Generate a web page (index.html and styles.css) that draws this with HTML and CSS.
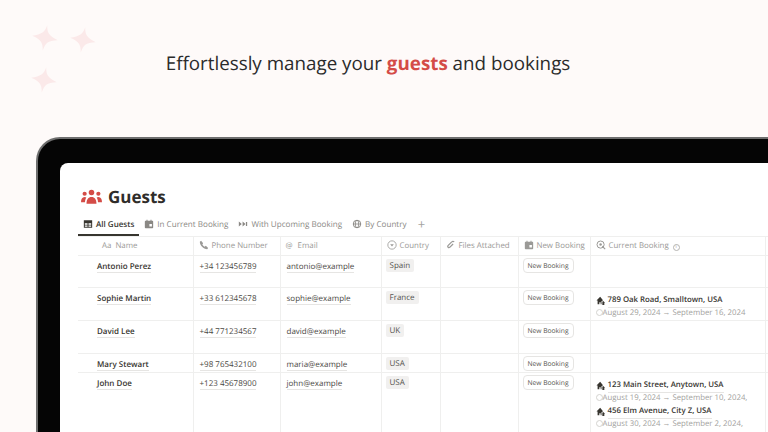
FILE: index.html
```html
<!DOCTYPE html>
<html lang="en">
<head>
    <meta charset="UTF-8">
    <title>Guests</title>
    <link rel="stylesheet" href="styles.css">
</head>
<body>
    <svg width="0" height="0" class="defs">
        <symbol id="i-cal" viewBox="0 0 12 12"><path d="M1 3.2c0-.7.5-1.200 1.200-1.200H3V.8h1.200V2h3.600V.8H9V2h.8c.7 0 1.200.5 1.200 1.200v7.100c0 .5-.4.9-.9.9H1.900a.9.9 0 0 1-.9-.9zM6.500 6v3h3V6z"/></symbol>
        <symbol id="i-house" viewBox="0 0 12 12"><path d="M5 1 .6 5.400h1.300V10H4V7.500h1.600V10h1V6.200L8.400 5zM8.300 5.800l2.600 2.300H10v2.600H7.600V7.400z"/></symbol>
        <symbol id="i-star" viewBox="0 0 26 26"><path d="M13 0c1 7 3 10 13 13-10 2-12 5-13 13-1-8-4-11-13-13 9-3 12-6 13-13z"/></symbol>
    </svg>

    <div class="page">
        <div class="stars">
            <svg class="star star-a"><use href="#i-star"/></svg>
            <svg class="star star-b"><use href="#i-star"/></svg>
            <svg class="star star-c"><use href="#i-star"/></svg>
        </div>

        <h1 class="headline">Effortlessly manage your <strong>guests</strong> and bookings</h1>

        <div class="device">
            <div class="screen">
                <div class="title-row">
                    <svg class="title-icon" viewBox="0 0 22 16">
                        <circle cx="11" cy="3.2" r="2.9"/><circle cx="3.8" cy="4.6" r="2.2"/><circle cx="18.2" cy="4.6" r="2.2"/>
                        <path d="M5.800 15c0-4.600 1.900-7 5.200-7s5.200 2.400 5.200 7zM0 13.500c0-3.300 1.200-5.500 3.700-5.500 .8 0 1.400.2 1.900.6C4.700 10 4.300 11.600 4.200 13.500zM22 13.500c0-3.300-1.200-5.500-3.700-5.500-.8 0-1.400.2-1.900.6.900 1.400 1.300 3 1.400 4.900z"/>
                    </svg>
                    <h2>Guests</h2>
                </div>

                <div class="tabs">
                    <div class="tab active">
                        <svg class="ico" viewBox="0 0 12 12"><path d="M1 1.500h10v9H1zM2.200 5v1.800h3.200V5zm4.400 0v1.800h3.200V5zM2.200 7.800v1.600h3.200V7.800zm4.400 0v1.600h3.200V7.800z" fill-rule="evenodd"/></svg>
                        All Guests
                    </div>
                    <div class="tab"><svg class="ico"><use href="#i-cal"/></svg>In Current Booking</div>
                    <div class="tab">
                        <svg class="ico" viewBox="0 0 12 12"><path d="M1 3l3.500 3L1 9zM5.500 3 9 6 5.500 9zM9.500 3.500h1.500v5H9.500z"/></svg>
                        With Upcoming Booking
                    </div>
                    <div class="tab">
                        <svg class="ico" viewBox="0 0 12 12"><circle cx="6" cy="6" r="4.500" fill="none" stroke="currentColor" stroke-width="1.200"/><ellipse cx="6" cy="6" rx="2" ry="4.500" fill="none" stroke="currentColor"/><path d="M1.500 6h9" stroke="currentColor"/></svg>
                        By Country
                    </div>
                    <span class="tab-add">+</span>
                </div>

                <table class="guests">
                    <colgroup>
                        <col class="c-name"><col class="c-phone"><col class="c-email"><col class="c-country">
                        <col class="c-files"><col class="c-new"><col class="c-current"><col class="c-rest">
                    </colgroup>
                    <thead>
                        <tr>
                            <th class="name-head"><span class="aa">Aa</span>Name</th>
                            <th><svg class="ico" viewBox="0 0 12 12"><path d="M2.500 1 5 3.800 4 5.300c.6 1.100 1.500 2 2.700 2.700l1.500-1 2.800 2.500-1.200 1.500C5.300 11 1 6.700 1 2.200z"/></svg>Phone Number</th>
                            <th><span class="at">@</span>Email</th>
                            <th><svg class="ico" viewBox="0 0 12 12"><circle cx="6" cy="6" r="5" fill="none" stroke="currentColor"/><path d="M3.800 5h4.400L6 7.800z"/></svg>Country</th>
                            <th><svg class="ico" viewBox="0 0 12 12"><path d="M9.800 2.200a2 2 0 0 0-2.900 0L2.400 6.700a1.500 1.500 0 0 0 2.100 2.100l4-4" fill="none" stroke="currentColor" stroke-width="1.500"/></svg>Files Attached</th>
                            <th><svg class="ico"><use href="#i-cal"/></svg>New Booking</th>
                            <th><svg class="ico" viewBox="0 0 12 12"><circle cx="5.500" cy="5.500" r="4.300" fill="none" stroke="currentColor" stroke-width="1.200"/><circle cx="5.500" cy="5.500" r="1.500"/><path d="M7.500 7.500l3.500 3.500" stroke="currentColor" stroke-width="1.300"/></svg>Current Booking<span class="info">i</span></th>
                            <th></th>
                        </tr>
                    </thead>
                    <tbody>
                        <tr class="r1">
                            <td class="name"><span>Antonio Perez</span></td>
                            <td><span class="line">+34 123456789</span></td>
                            <td><span class="line">antonio@example</span></td>
                            <td class="cell-tag"><span class="tag">Spain</span></td>
                            <td></td>
                            <td class="cell-btn"><span class="btn">New Booking</span></td>
                            <td></td><td></td>
                        </tr>
                        <tr class="r2">
                            <td class="name"><span>Sophie Martin</span></td>
                            <td><span class="line">+33 612345678</span></td>
                            <td><span class="line">sophie@example</span></td>
                            <td class="cell-tag"><span class="tag">France</span></td>
                            <td></td>
                            <td class="cell-btn"><span class="btn">New Booking</span></td>
                            <td class="booking">
                                <div class="place"><svg class="ico"><use href="#i-house"/></svg><span>789 Oak Road, Smalltown, USA</span></div>
                                <div class="dates"><i class="dot"></i>August 29, 2024 → September 16, 2024</div>
                            </td>
                            <td></td>
                        </tr>
                        <tr class="r3">
                            <td class="name"><span>David Lee</span></td>
                            <td><span class="line">+44 771234567</span></td>
                            <td><span class="line">david@example</span></td>
                            <td class="cell-tag"><span class="tag">UK</span></td>
                            <td></td>
                            <td class="cell-btn"><span class="btn">New Booking</span></td>
                            <td></td><td></td>
                        </tr>
                        <tr class="r4">
                            <td class="name"><span>Mary Stewart</span></td>
                            <td><span class="line">+98 765432100</span></td>
                            <td><span class="line">maria@example</span></td>
                            <td class="cell-tag"><span class="tag">USA</span></td>
                            <td></td>
                            <td class="cell-btn"><span class="btn">New Booking</span></td>
                            <td></td><td></td>
                        </tr>
                        <tr class="r5">
                            <td class="name"><span>John Doe</span></td>
                            <td><span class="line">+123 45678900</span></td>
                            <td><span class="line">john@example</span></td>
                            <td class="cell-tag"><span class="tag">USA</span></td>
                            <td></td>
                            <td class="cell-btn"><span class="btn">New Booking</span></td>
                            <td class="booking">
                                <div class="place"><svg class="ico"><use href="#i-house"/></svg><span>123 Main Street, Anytown, USA</span></div>
                                <div class="dates"><i class="dot"></i>August 19, 2024 → September 10, 2024,</div>
                                <div class="place"><svg class="ico"><use href="#i-house"/></svg><span>456 Elm Avenue, City Z, USA</span></div>
                                <div class="dates"><i class="dot"></i>August 30, 2024 → September 2, 2024,</div>
                            </td>
                            <td></td>
                        </tr>
                    </tbody>
                </table>
            </div>
        </div>
    </div>
</body>
</html>
```

FILE: styles.css
```css
* {
    margin: 0;
    padding: 0;
    box-sizing: border-box;
}

html, body {
    height: 432px;
    overflow: hidden;
}

body {
    font-family: 'Open Sans', sans-serif;
    background: #fefaf9;
    color: #37352f;
    text-rendering: geometricPrecision;
}

.defs {
    display: block;
    height: 0;
}

.page {
    position: relative;
    width: 768px;
    height: 432px;
    overflow: hidden;
}

/* decoration */
.star {
    position: absolute;
    width: 26px;
    height: 26px;
    fill: #fbe9e9;
    transform: rotate(10deg);
}

.star-a { left: 32px; top: 25px; }
.star-b { left: 70px; top: 27px; }
.star-c { left: 31px; top: 67px; }

.headline {
    padding: 49px 32px 0 0;
    height: 137px;
    text-align: center;
    font-size: 18.8px;
    line-height: 28px;
    font-weight: 400;
    color: #2b2b2b;
}

.headline strong {
    color: #d44c47;
    font-weight: 700;
}

.device {
    margin-left: 36px;
    width: 800px;
    height: 340px;
    padding: 24px 0 0 22px;
    background: #050505;
    border: 2px solid #6e6e6e;
    border-right: 0;
    border-bottom: 0;
    border-radius: 24px 0 0 0;
}

.screen {
    background: #fff;
    height: 320px;
    border-radius: 8px 0 0 0;
    padding: 22px 0 0 18px;
    overflow: hidden;
}

.title-row {
    display: flex;
    align-items: center;
    gap: 6px;
    height: 24px;
    padding-left: 3px;
}

.title-icon {
    width: 21px;
    height: 16px;
    fill: #d44c47;
}

.title-row h2 {
    font-size: 17px;
    font-weight: 700;
    line-height: 24px;
    color: #2f2d2a;
}

.tabs {
    display: flex;
    align-items: center;
    height: 24px;
    margin-top: 3px;
    font-size: 8.1px;
    font-weight: 500;
    color: #8a8884;
}

.tab {
    display: flex;
    align-items: center;
    gap: 3px;
    height: 100%;
    padding: 0 5px;
    white-space: nowrap;
}

.tab.active {
    color: #37352f;
    font-size: 8px;
    font-weight: 600;
    border-bottom: 2px solid #37352f;
    padding-top: 2px;
}

.tab-add {
    margin-left: 6px;
    font-size: 13px;
    font-weight: 400;
    color: #a5a4a1;
}

.ico {
    width: 10px;
    height: 10px;
    flex: none;
    fill: currentColor;
}

/* table */
.guests {
    table-layout: fixed;
    border-collapse: collapse;
    width: 690px;
    font-size: 8px;
    color: #4a4843;
}

.c-name { width: 115px; }
.c-phone { width: 87px; }
.c-email { width: 101px; }
.c-country { width: 59px; }
.c-files { width: 78px; }
.c-new { width: 72px; }
.c-current { width: 175px; }
.c-rest { width: 3px; }

.guests th, .guests td {
    border: 1px solid #efefee;
    vertical-align: top;
    white-space: nowrap;
    overflow: hidden;
}

.guests th:first-child, .guests td:first-child {
    border-left: 0;
}

.guests th {
    height: 19px;
    padding: 1px 5px 0;
    line-height: 17px;
    font-size: 7.9px;
    font-weight: 400;
    text-align: left;
    color: #9b9a97;
}

.guests th .ico {
    vertical-align: -1.500px;
    margin-right: 3px;
}

.guests td {
    padding: 4px 6px 0;
    line-height: 13px;
}

.guests th.name-head {
    padding-left: 24px;
}

.aa {
    margin-right: 4px;
}

.at {
    margin-right: 5px;
}

.info {
    display: inline-block;
    width: 7px;
    height: 7px;
    margin-left: 4px;
    border: 1px solid #b5b4b1;
    border-radius: 50%;
    font-size: 5px;
    line-height: 5px;
    text-align: center;
}

.r1 td { height: 32px; }
.r2 td { height: 33px; }
.r3 td { height: 33px; }
.r4 td { height: 19px; }
.r5 td { height: 80px; }

.guests td.name {
    padding-left: 19px;
    font-weight: 600;
    color: #37352f;
}

.name span, .line, .place span {
    border-bottom: 1px solid #e6e5e3;
}

.guests td.cell-tag {
    padding: 3px 4px 0;
}

.tag {
    display: inline-block;
    padding: 0 4px;
    height: 13px;
    line-height: 13px;
    font-size: 8px;
    background: #f1f0ef;
    border-radius: 2px;
    color: #55534e;
}

.guests td.cell-btn {
    padding: 2px 4px 0;
}

.btn {
    display: inline-block;
    height: 15px;
    padding: 0 4px;
    line-height: 13px;
    font-size: 6.7px;
    background: #fff;
    border: 1px solid #e6e5e3;
    border-radius: 4px;
    color: #55534e;
}

.guests td.booking {
    padding: 6px 5px 0;
    font-size: 7.8px;
}

.place {
    display: flex;
    align-items: center;
    gap: 2px;
    height: 13px;
    font-weight: 600;
    color: #37352f;
}

.dates {
    height: 13px;
    color: #a3a29e;
}

.dot {
    display: inline-block;
    width: 7px;
    height: 7px;
    border: 1px solid #d4d3d0;
    border-radius: 50%;
    vertical-align: -1px;
}
```
